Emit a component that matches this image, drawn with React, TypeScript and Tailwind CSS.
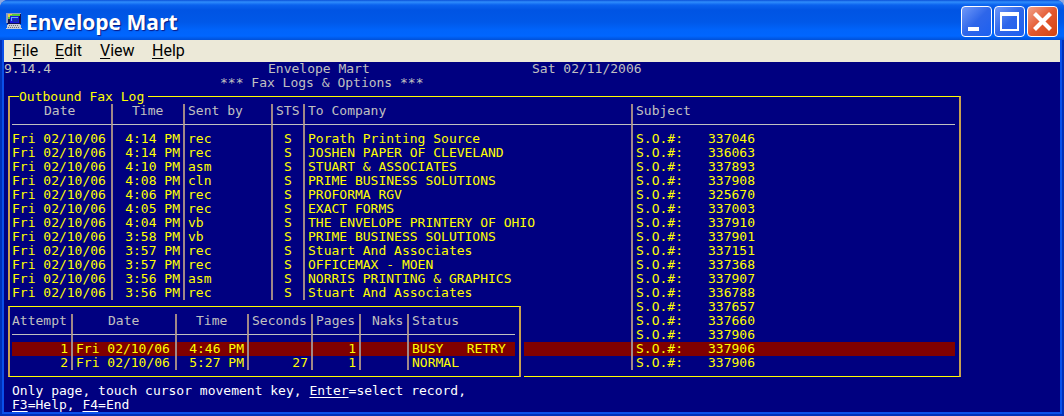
import React from 'react';

type Fax = { date: string; time: string; by: string; sts: string; company: string; order: string };

const rows: [string, string, string, string][] = [
  ['4:14', 'rec', 'Porath Printing Source', '337046'],
  ['4:14', 'rec', 'JOSHEN PAPER OF CLEVELAND', '336063'],
  ['4:10', 'asm', 'STUART & ASSOCIATES', '337893'],
  ['4:08', 'cln', 'PRIME BUSINESS SOLUTIONS', '337908'],
  ['4:06', 'rec', 'PROFORMA RGV', '325670'],
  ['4:05', 'rec', 'EXACT FORMS', '337003'],
  ['4:04', 'vb', 'THE ENVELOPE PRINTERY OF OHIO', '337910'],
  ['3:58', 'vb', 'PRIME BUSINESS SOLUTIONS', '337901'],
  ['3:57', 'rec', 'Stuart And Associates', '337151'],
  ['3:57', 'rec', 'OFFICEMAX - MOEN', '337368'],
  ['3:56', 'asm', 'NORRIS PRINTING & GRAPHICS', '337907'],
  ['3:56', 'rec', 'Stuart And Associates', '336788'],
  ['', '', '', '337657'],
  ['', '', '', '337660'],
  ['', '', '', '337906'],
  ['', '', '', '337906'],
  ['', '', '', '337906'],
];

const faxes: Fax[] = rows.map(([time, by, company, order]) => ({
  date: time ? 'Fri 02/10/06' : '',
  time: time ? time + ' PM' : '',
  by,
  sts: time ? 'S' : '',
  company,
  order,
}));
const selectedFax = 15;

const attempts = [
  ['1', 'Fri 02/10/06', '4:46 PM', '', '1', '', 'BUSY   RETRY'],
  ['2', 'Fri 02/10/06', '5:27 PM', '27', '1', '', 'NORMAL'],
];

const rule = 'border-l-2 border-l-[#a08888]';
const bar = `${rule} pl-[3px]`;
const head = 'h-[21px] p-0 text-left align-top font-normal text-[#c0c0c0] border-b border-b-[#c0c0c0]';
const frame = 'border-x-2 border-y border-x-[#c8a050] border-y-[#ffff00] pt-[7px] pr-[4px] pb-[6px] pl-[2px]';

function Spacer({ columns }: { columns: number }) {
  return (
    <tr aria-hidden="true">
      {Array.from({ length: columns }, (_, i) => (
        <td key={i} className={i ? `${rule} h-[7px] p-0` : 'h-[7px] p-0'} />
      ))}
    </tr>
  );
}

function FaxTable() {
  return (
    <table className="w-full table-fixed border-separate border-spacing-0">
      <colgroup>
        <col className="w-[99px]" />
        <col className="w-[72px]" />
        <col className="w-[88px]" />
        <col className="w-[32px]" />
        <col className="w-[328px]" />
        <col />
      </colgroup>
      <thead>
        <tr>
          <th className={`${head} pl-8`}>Date</th>
          <th className={`${head} ${rule} pl-[19px]`}>Time</th>
          <th className={`${head} ${bar}`}>Sent by</th>
          <th className={`${head} ${bar}`}>STS</th>
          <th className={`${head} ${bar}`}>To Company</th>
          <th className={`${head} ${bar}`}>Subject</th>
        </tr>
        <Spacer columns={6} />
      </thead>
      <tbody>
        {faxes.map((f, i) => (
          <tr key={i} className={i === selectedFax ? 'h-[14px] bg-[#800000]' : 'h-[14px]'}>
            <td className="p-0">{f.date}</td>
            <td className={`${bar} pr-[3px] text-right`}>{f.time}</td>
            <td className={bar}>{f.by}</td>
            <td className={`${rule} pl-[11px]`}>{f.sts}</td>
            <td className={bar}>{f.company}</td>
            <td className={bar}>
              <span className="inline-block w-[72px]">S.O.#:</span>
              {f.order}
            </td>
          </tr>
        ))}
      </tbody>
    </table>
  );
}

function AttemptTable() {
  const right = `${bar} pr-[3px] text-right`;
  return (
    <table className="w-full table-fixed border-separate border-spacing-0">
      <colgroup>
        <col className="w-[59px]" />
        <col className="w-[104px]" />
        <col className="w-[72px]" />
        <col className="w-[64px]" />
        <col className="w-[48px]" />
        <col className="w-[48px]" />
        <col />
      </colgroup>
      <thead>
        <tr>
          <th className={head}>Attempt</th>
          <th className={`${head} ${rule} pl-[35px]`}>Date</th>
          <th className={`${head} ${rule} pl-[19px]`}>Time</th>
          <th className={`${head} ${bar}`}>Seconds</th>
          <th className={`${head} ${bar}`}>Pages</th>
          <th className={`${head} ${rule} pl-[11px]`}>Naks</th>
          <th className={`${head} ${bar}`}>Status</th>
        </tr>
        <Spacer columns={7} />
      </thead>
      <tbody>
        {attempts.map((a, i) => (
          <tr key={a[0]} className={i === 0 ? 'h-[14px] bg-[#800000]' : 'h-[14px]'}>
            <td className="p-0 pr-[3px] text-right">{a[0]}</td>
            <td className={bar}>{a[1]}</td>
            <td className={right}>{a[2]}</td>
            <td className={right}>{a[3]}</td>
            <td className={right}>{a[4]}</td>
            <td className={right}>{a[5]}</td>
            <td className={bar}>{a[6]}</td>
          </tr>
        ))}
      </tbody>
    </table>
  );
}

function AppIcon() {
  return (
    <svg className="h-[17px] w-4 shrink-0" viewBox="0 0 16 17" aria-hidden="true" shapeRendering="crispEdges">
      <rect x="1" y="1" width="14" height="11" fill="#101058" />
      <path d="M0 1h15v1H2v9H0z" fill="#8c9cc8" />
      <path d="M2 2h12v2H5v3H2z" fill="#58c838" />
      <path d="M2 2h4v1H4v2H2z" fill="#f0d040" />
      <rect x="4" y="4" width="9" height="7" fill="#1818e0" />
      <path d="M5 5h7v1H6v3H5z" fill="#60b0f8" />
      <rect x="7" y="7" width="5" height="3" fill="#1030a8" />
      <path d="M2 12h12l2 5H0z" fill="#c8ccd4" />
      <path d="M3 13h1v1H3zM5 13h1v1H5zM7 13h1v1H7zM9 13h1v1H9zM11 13h1v1h-1zM2 15h1v1H2zM4 15h1v1H4zM6 15h1v1H6zM8 15h1v1H8zM10 15h1v1h-1zM12 15h1v1h-1z" fill="#687080" />
    </svg>
  );
}

const caption =
  'flex h-[31px] w-[31px] items-center justify-center rounded-[4px] border border-white bg-linear-to-br';
const blue = 'from-[#7098f8] via-[#2e66ea] to-[#1c60f0]';

function TitleBar() {
  return (
    <header className="flex h-10 items-center rounded-t-lg bg-[linear-gradient(180deg,#0a50d8_0,#2f8dfc_2px,#0a62ee_5px,#0054e3_10px,#0058e8_22px,#0064fb_30px,#0066ff_36px,#0050d8_40px)] pr-[6px] pl-[6px]">
      <AppIcon />
      <h1 className="mt-1 ml-1 flex-1 font-['Open_Sans',sans-serif] text-[21px] leading-[30px] font-bold text-white [text-shadow:1px_1px_1px_#0a1883]">
        Envelope Mart
      </h1>
      <div className="mt-[3px] flex gap-[2px]">
        <button aria-label="Minimize" className={`${caption} ${blue}`}>
          <svg className="h-[29px] w-[29px]" viewBox="0 0 29 29"><rect x="6" y="20" width="11" height="4" fill="#fff" /></svg>
        </button>
        <button aria-label="Maximize" className={`${caption} ${blue}`}>
          <svg className="h-[29px] w-[29px]" viewBox="0 0 29 29"><path d="M5 5h19v19H5zM7 9v13h15V9z" fillRule="evenodd" fill="#fff" /></svg>
        </button>
        <button aria-label="Close" className={`${caption} from-[#f0a088] via-[#e4582e] to-[#d04410]`}>
          <svg className="h-[29px] w-[29px]" viewBox="0 0 29 29"><path d="M6.500 6.500l16 16M22.500 6.500l-16 16" stroke="#fff" strokeWidth="4.200" /></svg>
        </button>
      </div>
    </header>
  );
}

const menus = [
  ['F', 'ile', 'w-[42px]'],
  ['E', 'dit', 'w-[45px]'],
  ['V', 'iew', 'w-[52px]'],
  ['H', 'elp', 'w-[50px]'],
];

export default function App() {
  return (
    <div className="bg-[#8fa8e0]">
      <div className="rounded-t-lg bg-[#0046d8]">
        <TitleBar />
        <div className="border-x-2 border-b-2 border-[#0030b8]">
          <div className="border-x-2 border-b-2 border-[#0a50ea]">
            <nav className="flex h-[22px] items-center bg-[#ece9d8] pl-[9px] font-[Roboto,sans-serif] text-[16px] leading-[22px] text-black">
              {menus.map(([key, rest, width]) => (
                <button key={key} className={`${width} text-left`}>
                  <span className="underline underline-offset-2">{key}</span>
                  {rest}
                </button>
              ))}
            </nav>
            <main className="bg-[#000080] font-['DejaVu_Sans_Mono',monospace] text-[13px] leading-[14px] whitespace-pre text-[#ffff00]">
              <div className="flex text-[#c0c0c0]">
                <span className="w-[264px]">9.14.4</span>
                <span className="w-[264px]">Envelope Mart</span>
                <span>Sat 02/11/2006</span>
              </div>
              <h2 className="pl-[216px] text-[#c0c0c0]">*** Fax Logs &amp; Options ***</h2>
              <section className={`relative mt-[6px] mr-[99px] ml-[4px] ${frame}`}>
                <h3 className="absolute -top-[7px] left-[9px] w-[129px] bg-[#000080]">Outbound Fax Log</h3>
                <FaxTable />
                <div className="absolute -bottom-[7px] -left-[6px] w-[520px] bg-[#000080] pt-[6px] pr-[3px] pb-[6px] pl-[4px]">
                  <div className={frame}>
                    <AttemptTable />
                  </div>
                </div>
              </section>
              <footer className="mt-[7px] pl-2 text-white">
                <p>
                  Only page, touch cursor movement key,{' '}
                  <kbd className="font-[inherit] underline underline-offset-2">Enter</kbd>=select record,
                </p>
                <p>
                  <kbd className="font-[inherit] underline underline-offset-2">F3</kbd>=Help,{' '}
                  <kbd className="font-[inherit] underline underline-offset-2">F4</kbd>=End
                </p>
              </footer>
            </main>
          </div>
        </div>
      </div>
    </div>
  );
}
